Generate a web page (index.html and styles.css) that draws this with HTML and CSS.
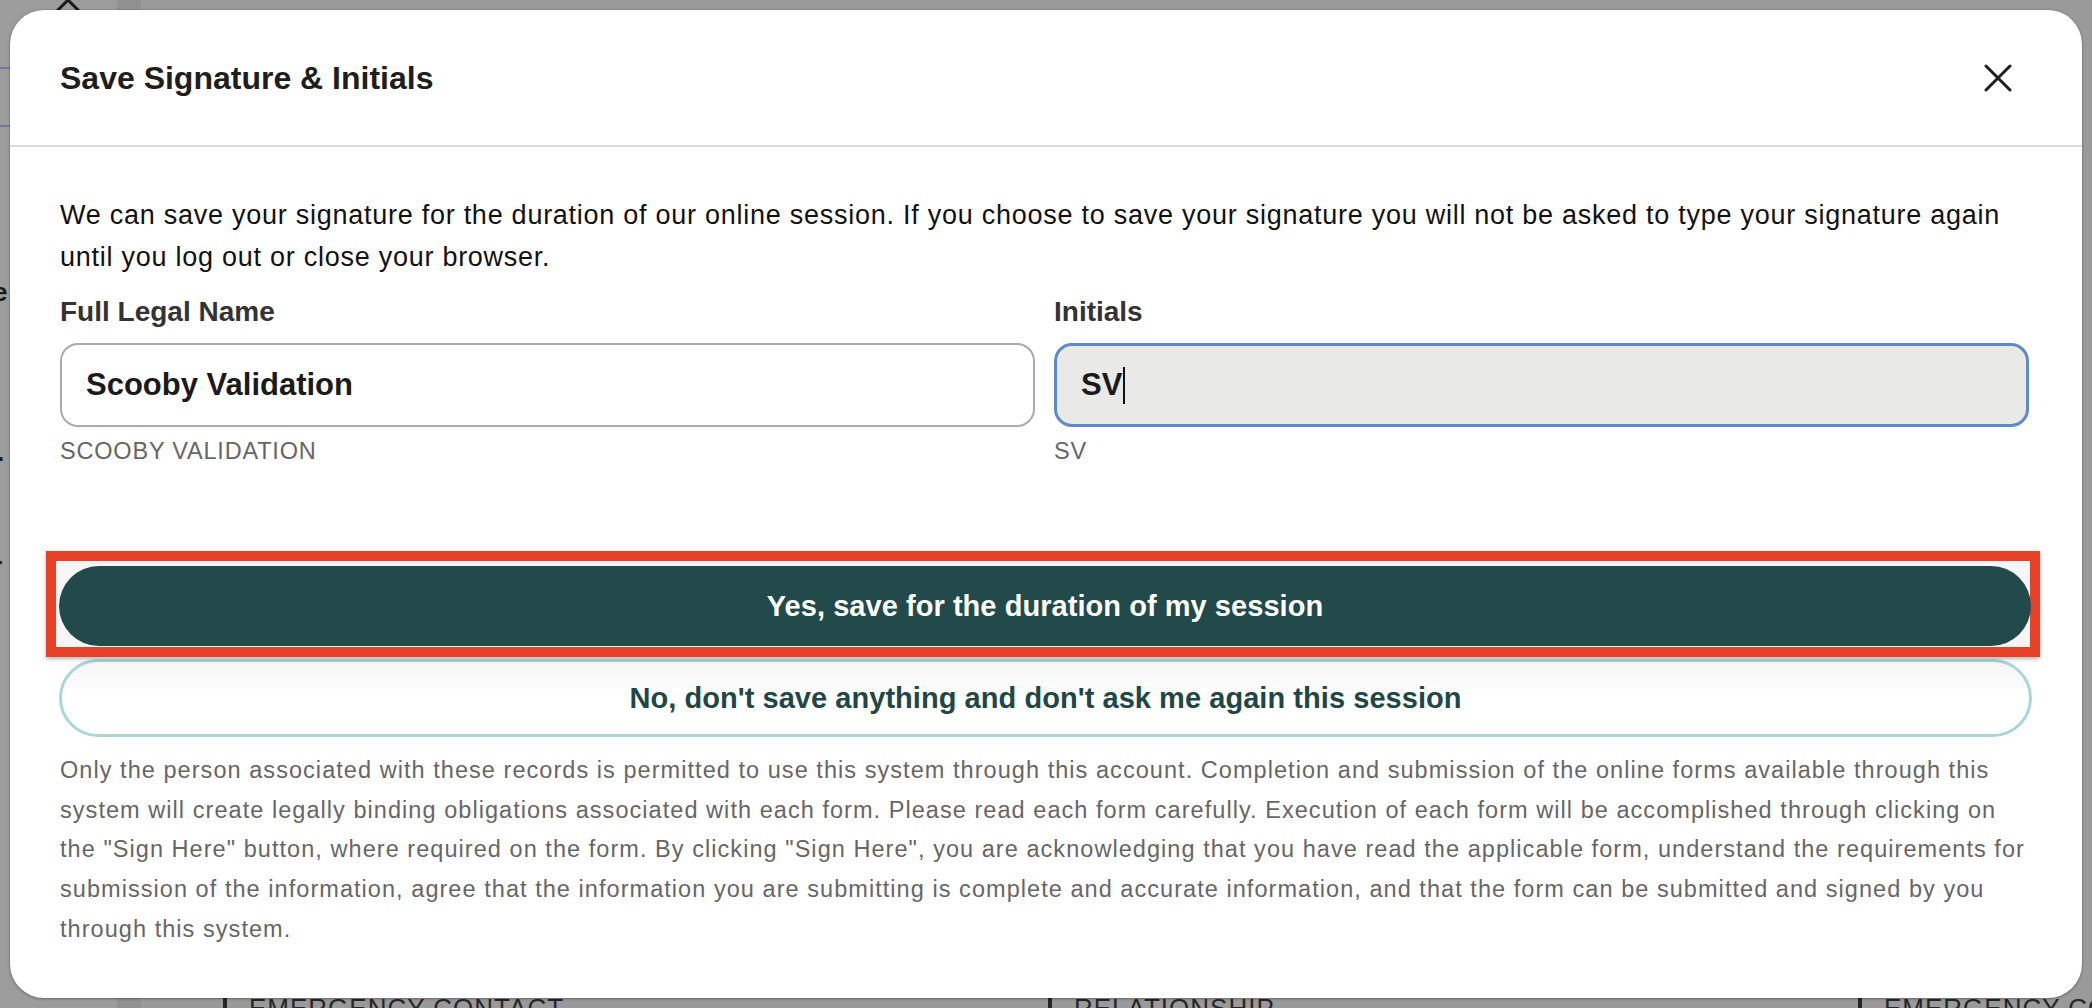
FILE: index.html
```html
<!DOCTYPE html>
<html lang="en">
<head>
<meta charset="utf-8">
<title>Save Signature &amp; Initials</title>
<link rel="stylesheet" href="styles.css">
</head>
<body>
<div class="page">
  <div class="page-edge">
    <svg class="page-x" width="30" height="30" viewBox="0 0 30 30"><path d="M3 3 L27 27 M27 3 L3 27" stroke="#1c1c1c" stroke-width="3" fill="none" stroke-linecap="round"/></svg>
    <div class="edge-line edge-line-1"></div>
    <div class="edge-line edge-line-2"></div>
    <span class="edge-char edge-e">e</span>
    <span class="edge-char edge-dot">.</span>
    <span class="edge-char edge-r">r</span>
  </div>
  <div class="page-rail"></div>
  <div class="page-main">
    <div class="page-right">
      <div class="rline r1"></div>
      <div class="rline r2"></div>
      <div class="rline r3"></div>
      <div class="rline r4"></div>
      <div class="rline r5"></div>
    </div>
    <div class="page-bottom">
      <span class="pcol pcol-1">EMERGENCY CONTACT</span>
      <span class="pcol pcol-2">RELATIONSHIP</span>
      <span class="pcol pcol-3">EMERGENCY CONTACT</span>
    </div>
  </div>
</div>

<div class="modal" role="dialog" aria-labelledby="modal-title">
  <div class="modal-header">
    <h2 id="modal-title" class="modal-title">Save Signature &amp; Initials</h2>
    <button class="close-btn" aria-label="Close">
      <svg width="28" height="28" viewBox="0 0 28 28"><path d="M2 2 L26 26 M26 2 L2 26" stroke="#1e1e1e" stroke-width="3" fill="none" stroke-linecap="round"/></svg>
    </button>
  </div>
  <div class="modal-body">
    <p class="intro">We can save your signature for the duration of our online session. If you choose to save your signature you will not be asked to type your signature again until you log out or close your browser.</p>
    <div class="fields">
      <div class="field-group">
        <div class="field-label">Full Legal Name</div>
        <div class="field">Scooby Validation</div>
        <div class="field-help">SCOOBY VALIDATION</div>
      </div>
      <div class="field-group">
        <div class="field-label">Initials</div>
        <div class="field field-focus">SV<span class="caret"></span></div>
        <div class="field-help">SV</div>
      </div>
    </div>
    <div class="actions">
      <div class="primary-wrap">
        <div class="highlight"></div>
        <button class="btn btn-primary">Yes, save for the duration of my session</button>
      </div>
      <button class="btn btn-secondary">No, don't save anything and don't ask me again this session</button>
    </div>
    <p class="disclaimer">Only the person associated with these records is permitted to use this system through this account. Completion and submission of the online forms available through this system will create legally binding obligations associated with each form. Please read each form carefully. Execution of each form will be accomplished through clicking on the "Sign Here" button, where required on the form. By clicking "Sign Here", you are acknowledging that you have read the applicable form, understand the requirements for submission of the information, agree that the information you are submitting is complete and accurate information, and that the form can be submitted and signed by you through this system.</p>
  </div>
</div>
</body>
</html>
```

FILE: styles.css
```css
* { box-sizing: border-box; }

html, body {
  margin: 0;
  padding: 0;
}

body {
  width: 2092px;
  height: 1008px;
  overflow: hidden;
  position: relative;
  background: #9a9a9a;
  font-family: "Liberation Sans", Arial, Helvetica, sans-serif;
}

/* ---------- dimmed page behind the dialog ---------- */
.page {
  display: grid;
  grid-template-columns: 117px 24px 1fr;
  height: 1008px;
}

.page-edge {
  display: flex;
  flex-direction: column;
  align-items: flex-start;
  background: #9c9c9c;
}

.page-x {
  margin: -15px 0 0 53px;
  flex: none;
}

.edge-line {
  width: 12px;
  height: 2px;
  background: #6c7aa3;
}
.edge-line-1 { margin-top: 52px; }
.edge-line-2 { margin-top: 56px; }

.edge-char {
  font-weight: bold;
  font-size: 26px;
  line-height: 26px;
  color: #1a1a1a;
  margin-left: -7px;
}
.edge-e { margin-top: 152px; }
.edge-dot { margin-top: 134px; margin-left: -3px; }
.edge-r { margin-top: 88px; margin-left: -8px; }

.page-rail {
  background: #919191;
}

.page-main {
  display: flex;
  flex-direction: column;
}

.page-right {
  align-self: flex-end;
  width: 20px;
  display: flex;
  flex-direction: column;
}

.rline {
  height: 2px;
  background: #4a4a4a;
}
.r1 { margin-top: 342px; }
.r2 { margin-top: 110px; }
.r3 { margin-top: 92px; }
.r4 { margin-top: 106px; }
.r5 { margin-top: 92px; }

.page-bottom {
  margin-top: auto;
  display: grid;
  grid-template-columns: 825px 810px 1fr;
  padding-left: 82px;
  height: 14px;
  overflow: hidden;
}

.pcol {
  font-size: 26px;
  letter-spacing: 1px;
  line-height: 26px;
  color: #262626;
  border-left: 4px solid #262626;
  padding-left: 22px;
  white-space: nowrap;
  margin-top: 1px;
}

/* ---------- dialog ---------- */
.modal {
  position: absolute;
  left: 10px;
  top: 10px;
  width: 2072px;
  height: 988px;
  background: #ffffff;
  border-radius: 34px;
  box-shadow: 0 0 0 1px rgba(0, 0, 0, 0.05), 0 1px 3px rgba(0, 0, 0, 0.3);
  display: flex;
  flex-direction: column;
  overflow: hidden;
}

.modal-header {
  flex: none;
  height: 137px;
  border-bottom: 2px solid #dcdcdc;
  display: flex;
  align-items: center;
  justify-content: space-between;
  padding: 0 70px 0 50px;
}

.modal-title {
  margin: 2px 0 0;
  font-size: 32px;
  font-weight: bold;
  color: #1e1e1e;
}

.close-btn {
  border: 0;
  background: none;
  padding: 0;
  width: 28px;
  height: 28px;
  display: flex;
  margin-top: 0;
}

.modal-body {
  padding: 47px 53px 0 50px;
}

.intro {
  margin: 0;
  font-size: 27px;
  letter-spacing: 0.74px;
  line-height: 42px;
  color: #111111;
}

.fields {
  display: grid;
  grid-template-columns: 1fr 1fr;
  column-gap: 19px;
  margin-top: 17px;
}

.field-label {
  font-size: 28px;
  font-weight: bold;
  line-height: 34px;
  color: #333333;
  margin-bottom: 14px;
}

.field {
  height: 84px;
  border: 2px solid #ababab;
  border-radius: 18px;
  padding: 0 24px;
  display: flex;
  align-items: center;
  font-size: 31px;
  font-weight: bold;
  color: #1a1a1a;
  background: #ffffff;
}

.field-focus {
  border: 3px solid #5f8ac6;
  background: #e9e9e7;
}

.caret {
  display: inline-block;
  width: 2px;
  height: 37px;
  background: #111;
  margin-left: 1px;
}

.field-help {
  margin-top: 10px;
  font-size: 23.5px;
  letter-spacing: 0.8px;
  line-height: 29px;
  color: #666666;
}

.actions {
  margin-top: 100px;
  display: flex;
  flex-direction: column;
  gap: 13px;
}

.primary-wrap {
  position: relative;
  margin: 0 -2px 0 -1px;
}

.highlight {
  position: absolute;
  left: -13px;
  top: -15px;
  right: -9px;
  bottom: -11px;
  border: 10px solid #e8412a;
  background: #f6f6f6;
  box-shadow: 0 2px 4px rgba(0, 0, 0, 0.3);
}

.btn {
  display: block;
  width: 100%;
  border-radius: 40px;
  font-family: "Liberation Sans", Arial, Helvetica, sans-serif;
  font-weight: bold;
  font-size: 29px;
  letter-spacing: 0.05px;
  cursor: pointer;
}

.btn-primary {
  position: relative;
  height: 80px;
  border: 0;
  background: #234a4b;
  color: #ffffff;
}

.btn-secondary {
  height: 78px;
  margin: 0 -3px 0 -1px;
  width: auto;
  border: 3px solid #abd6d7;
  background: linear-gradient(#f5f5f5, #ffffff 45%);
  color: #1f4748;
}

.disclaimer {
  margin: 14px 0 0;
  font-size: 23.5px;
  letter-spacing: 1.05px;
  line-height: 39.7px;
  color: #666666;
}
```
